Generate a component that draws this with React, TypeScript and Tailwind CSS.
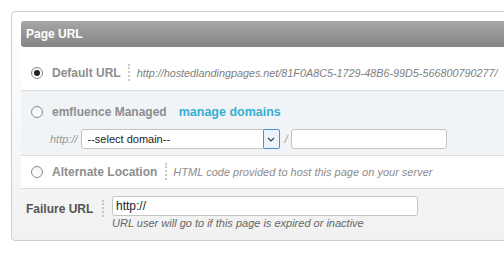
import React from "react"

const font = { fontFamily: '"Liberation Sans", Arial, sans-serif' }

function Radio({ checked = false }: { checked?: boolean }) {
  return (
    <span className="flex h-[12px] w-[12px] shrink-0 items-center justify-center rounded-full border border-[#8a8a8a] bg-gradient-to-b from-[#f4f4f4] to-white">
      {checked && <span className="h-[6px] w-[6px] rounded-full bg-[#222]" />}
    </span>
  )
}

function Sep({ h = "h-[15px]" }: { h?: string }) {
  return <span className={`w-0 shrink-0 border-l-2 border-dotted border-[#c8c8c8] ${h}`} />
}

export default function App() {
  return (
    <div className="h-[254px] w-full overflow-hidden bg-white pl-[11px] pt-[11px]" style={font}>
      <div className="h-[230px] w-[520px] rounded-[4px] border border-[#cfcfcf] bg-gradient-to-b from-white to-[#f1f1f1] pl-[9px] pt-[9px]">
        <div className="flex h-[26px] items-center rounded-l-[3px] bg-gradient-to-b from-[#a6a6a6] to-[#858585] pl-[5px] text-[12px] font-bold text-white">
          Page URL
        </div>

        <div className="bg-white">
          <div className="flex h-[44px] items-center border-b border-[#dcdcdc] pl-[10px] pt-[9px]">
            <Radio checked />
            <span className="ml-[9px] text-[12px] font-bold text-[#8e8e8e]">Default URL</span>
            <span className="ml-[7px] mr-[7px]">
              <Sep />
            </span>
            <span className="whitespace-nowrap text-[10.8px] italic text-[#808080]">
              http://hostedlandingpages.net/81F0A8C5-1729-48B6-99D5-566800790277/
            </span>
          </div>

          <div className="border-b border-[#dcdcdc] bg-[#f0f4f7] pl-[10px] pt-[14px] pb-[6px]">
            <div className="flex h-[14px] items-center">
              <Radio />
              <span className="ml-[9px] text-[12px] font-bold text-[#8e8e8e]">emfluence Managed</span>
              <span className="ml-[12px] text-[12.5px] font-bold text-[#3aaed3]">manage domains</span>
            </div>
            <div className="mt-[10px] flex h-[20px] items-center pl-[19px]">
              <span className="text-[11px] italic text-[#999]">http://</span>
              <div className="ml-[3px] flex h-[20px] w-[199px] items-center rounded-[3px] border border-[#c4c4c4] bg-white">
                <span className="flex-1 pl-[6px] text-[11px] text-[#222]">--select domain--</span>
                <span className="mr-[-1px] flex h-[20px] w-[17px] items-center justify-center rounded-[2px] border border-[#4a8fd8] bg-[#eef4fb]">
                  <svg width="8" height="5" viewBox="0 0 8 5">
                    <polyline points="1,1 4,4 7,1" fill="none" stroke="#444" strokeWidth="1.2" />
                  </svg>
                </span>
              </div>
              <span className="ml-[5px] text-[11px] italic text-[#999]">/</span>
              <div className="ml-[3px] h-[20px] w-[156px] rounded-[3px] border border-[#c4c4c4] bg-white" />
            </div>
          </div>

          <div className="flex h-[33px] items-center border-b border-[#dcdcdc] pl-[10px]">
            <Radio />
            <span className="ml-[9px] text-[12px] font-bold text-[#8e8e8e]">Alternate Location</span>
            <span className="ml-[8px] mr-[6px]">
              <Sep />
            </span>
            <span className="whitespace-nowrap text-[11px] italic text-[#8c8c8c]">HTML code provided to host this page on your server</span>
          </div>
        </div>

        <div className="flex pl-[5px] pt-[7px]">
          <span className="mt-[4px] w-[76px] shrink-0 whitespace-nowrap text-[12px] font-bold text-[#555]">Failure URL</span>
          <span className="mt-[1px]">
            <Sep h="h-[13px]" />
          </span>
          <div className="ml-[8px] flex flex-col">
            <div className="flex h-[20px] w-[306px] items-center rounded-[3px] border border-[#c4c4c4] bg-white pl-[3px] text-[12px] text-[#222]">
              http://
            </div>
            <span className="mt-[1px] whitespace-nowrap text-[11px] italic leading-[13px] text-[#666]">
              URL user will go to if this page is expired or inactive
            </span>
          </div>
        </div>
      </div>
    </div>
  )
}
